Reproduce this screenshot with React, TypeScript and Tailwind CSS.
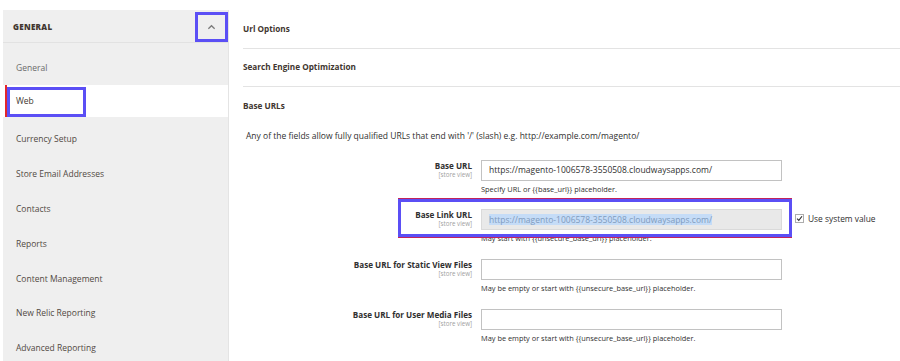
import React from "react";

const BLUE = "border-[#5b4ff5]";

function NavItem({ label }: { label: string }) {
  return (
    <div className="h-[35px] flex items-start pt-[17px] pl-[13px] text-[8.5px] leading-[10px] text-[#514943]">
      {label}
    </div>
  );
}

function FieldRow({
  label,
  value,
  note,
  disabled,
  highlight,
  height,
}: {
  label: string;
  value?: string;
  note: string;
  disabled?: boolean;
  highlight?: boolean;
  height: string;
}) {
  return (
    <div className={`relative flex ${height}`}>
      {highlight && (
        <div className="absolute left-[152px] top-[-10px] w-[394px] h-[38px] border-[3px] border-[#5b4ff5] shadow-[0_-1px_0_#c2245c,0_1px_0_#c2245c] pointer-events-none" />
      )}
      <div className="w-[226px] text-right pt-[1px]">
        <div className="text-[8.1px] leading-[10px] font-bold text-[#303030]">{label}</div>
        <div className="text-[6.2px] leading-[7px] text-[#a0a0a0]">[store view]</div>
      </div>
      <div className="ml-[9px] w-[301px]">
        <div
          className={`h-[21px] border flex items-center pl-[7px] text-[8.5px] ${
            disabled ? "bg-[#e9e9e9] border-[#dadada]" : "bg-white border-[#c2c2c2]"
          }`}
        >
          {value &&
            (disabled ? (
              <span className="bg-[#c5dcf7] text-[#7f9bbd] leading-[11px]">{value}</span>
            ) : (
              <span className="text-[#303030]">{value}</span>
            ))}
        </div>
        <div className="mt-[4px] text-[7.4px] leading-[9px] text-[#303030]">{note}</div>
      </div>
      {disabled && (
        <div className="ml-[13px] pt-[5px] flex items-start gap-[4px]">
          <div className="w-[9px] h-[9px] border border-[#adadad] bg-white flex items-center justify-center">
            <svg width="7" height="7" viewBox="0 0 10 10">
              <path d="M1.5 5.2 L4 7.6 L8.6 1.8" fill="none" stroke="#303030" strokeWidth="1.6" />
            </svg>
          </div>
          <span className="text-[8.4px] leading-[10px] text-[#303030]">Use system value</span>
        </div>
      )}
    </div>
  );
}

export default function App() {
  return (
    <div
      className="w-[900px] h-[361px] overflow-hidden bg-white flex"
      style={{ fontFamily: '"Open Sans", "Noto Sans", sans-serif' }}
    >
      {/* Sidebar */}
      <div className="pl-[3px] pt-[10px] flex">
        <aside className="w-[226px] bg-[#efefef] border-r border-[#e4e4e4] flex flex-col">
          <div className="h-[33px] flex justify-between border-b border-[#e2e2e2]">
            <div className="pl-[10px] pt-[12px] text-[8px] leading-[10px] font-extrabold text-[#41362f] tracking-[0.3px]">
              GENERAL
            </div>
            <div className={`self-end w-[33px] h-[30px] border-[3px] ${BLUE} flex items-center justify-center`}>
              <svg width="9" height="6" viewBox="0 0 10 6">
                <path d="M1.5 5 L5 1.6 L8.5 5" fill="none" stroke="#7a7a7a" strokeWidth="1.4" />
              </svg>
            </div>
          </div>
          <div className="h-[42px] pt-[20px] pl-[13px] text-[8.5px] leading-[10px] text-[#6b6b6b]">General</div>
          <div className="h-[33px] bg-white flex pl-[2px]">
            <div className="w-[2px] bg-[#e3262b] h-full" />
            <div className={`mt-[2px] w-[79px] h-[30px] border-[3px] ${BLUE} flex items-center pl-[6px] text-[8.5px] text-[#41362f]`}>
              Web
            </div>
          </div>
          <NavItem label="Currency Setup" />
          <NavItem label="Store Email Addresses" />
          <NavItem label="Contacts" />
          <NavItem label="Reports" />
          <NavItem label="Content Management" />
          <NavItem label="New Relic Reporting" />
          <NavItem label="Advanced Reporting" />
        </aside>
      </div>

      {/* Main */}
      <main className="flex-1 ml-[14px] pt-[10px]">
        <div className="h-[39px] flex items-center border-b border-[#e3e3e3] text-[8.2px] font-bold text-[#41362f]">
          Url Options
        </div>
        <div className="h-[38px] flex items-center border-b border-[#e3e3e3] text-[8.2px] font-bold text-[#41362f]">
          Search Engine Optimization
        </div>
        <div className="h-[38px] flex items-center text-[8.2px] font-bold text-[#41362f]">Base URLs</div>
        <div className="pl-[3px]">
          <div className="h-[35px] pt-[5px] text-[8.5px] leading-[12px] text-[#303030]">
            Any of the fields allow fully qualified URLs that end with '/' (slash) e.g. http://example.com/magento/
          </div>
          <div>
            <FieldRow
              height="h-[49px]"
              label="Base URL"
              value="https://magento-1006578-3550508.cloudwaysapps.com/"
              note="Specify URL or {{base_url}} placeholder."
            />
            <FieldRow
              height="h-[50px]"
              label="Base Link URL"
              value="https://magento-1006578-3550508.cloudwaysapps.com/"
              note="May start with {{unsecure_base_url}} placeholder."
              disabled
              highlight
            />
            <FieldRow
              height="h-[50px]"
              label="Base URL for Static View Files"
              note="May be empty or start with {{unsecure_base_url}} placeholder."
            />
            <FieldRow
              height="h-[50px]"
              label="Base URL for User Media Files"
              note="May be empty or start with {{unsecure_base_url}} placeholder."
            />
          </div>
        </div>
      </main>
    </div>
  );
}
